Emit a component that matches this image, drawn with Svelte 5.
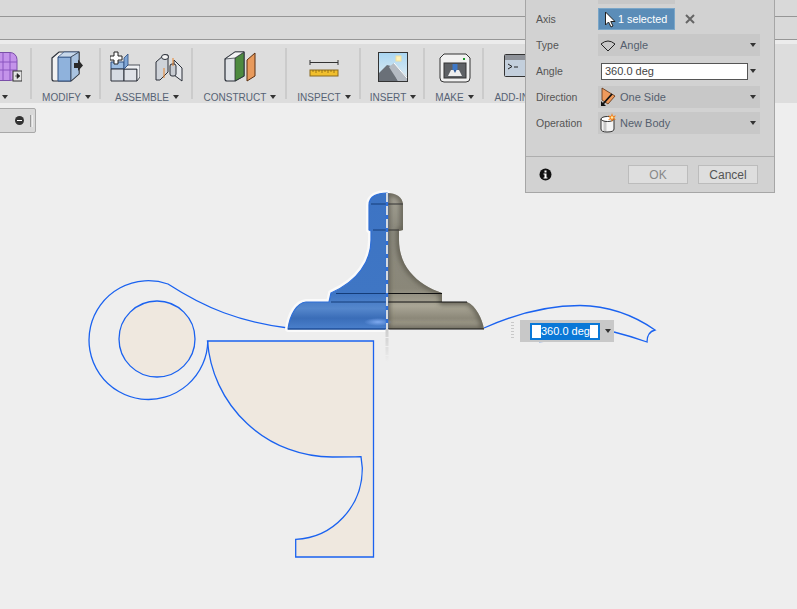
<script lang="ts">
  // Revolve dialog over the sketch canvas
  const dropdowns = {
    type: 'Angle',
    direction: 'One Side',
    operation: 'New Body',
  };
  const angle = '360.0 deg';

  // Full profile of the revolved body, screen coordinates (canvas viewBox starts at y=103)
  const blueHalf =
    'M387 193 C378 193 369 196 369 205 V230 L371 231 V240 C371 252 367 262 361 270 C354 280 344 287 331 293 L329 302 H306 C297 303 290 314 288 329 H387 Z';
  const greyHalf =
    'M387 193 C396 193 403 197 403 205 V230 L399 231 V240 C399 252 403 264 410 272 C418 282 430 289 442 293 V302 H467 C476 306 482 318 484 329 H387 Z';
</script>

<div class="app">
  <div class="menu-bar"></div>
  <div class="tab-bar"></div>

  <div class="toolbar">
    <div class="group" style="width: 32px">
      <svg class="tool-first" width="36" height="34" viewBox="0 0 36 34">
        <rect x="1" y="2.500" width="30" height="28" rx="7" fill="#c493ea" stroke="#7a4fa8" />
        <path d="M1 12H31M1 20H31M9 3V30M17 3V30M24 3V30" stroke="#8a55c0" stroke-width="1" fill="none" />
        <rect x="27" y="21" width="9" height="10" fill="#e4e4e4" stroke="#333" />
        <path d="M29 26H32M31 23.5L34 26L31 28.5Z" fill="#222" stroke="#222" stroke-width=".6" />
      </svg>
      <div class="label"><i></i></div>
    </div>

    <div class="group" style="width: 69px">
      <svg width="34" height="34" viewBox="0 0 34 34">
        <path d="M2 8L9 2H29V24L21 31H4Q2 31 2 29Z" fill="#f2f2f2" stroke="#2a2f38" stroke-width="1.2" />
        <path d="M8 7H21V31H8Z" fill="#8fb2dc" stroke="#2d4f80" />
        <path d="M8 7L14 2H29L21 7Z" fill="#c8d8ea" stroke="#2d4f80" stroke-width=".7" />
        <path d="M21 7L29 2V24L21 31Z" fill="#a9c3e0" stroke="#2a2f38" stroke-width=".7" />
        <path d="M24 13H28V9.5L33 15.5L28 21V18H24Z" fill="#2a2a2a" />
      </svg>
      <div class="label">MODIFY<i></i></div>
    </div>

    <div class="group" style="width: 92px">
      <div class="icons">
        <svg width="30" height="34" viewBox="0 0 30 34">
          <path d="M1 12H14V19H1Z" fill="#9cbde2" stroke="#2d4f80" />
          <path d="M1 19H14V31H1Z" fill="#d6dbe3" stroke="#2a2f38" />
          <path d="M14 19H27V31H14Z" fill="#dfe2e8" stroke="#2a2f38" />
          <path d="M14 19L18 15H30V27L27 31V19Z" fill="#eef0f3" stroke="#2a2f38" stroke-width=".8" />
          <path d="M14 8L18 4V15L14 19Z" fill="#7fa6d6" stroke="#2d4f80" stroke-width=".8" />
          <path d="M4 2H8V6H12V10H8V14H4V10H0V6H4Z" fill="#fff" stroke="#222" />
        </svg>
        <svg width="30" height="34" viewBox="0 0 30 34">
          <path d="M2 12L10 5H14V22L6 30H2Z" fill="#cfd3d9" stroke="#2a2f38" />
          <ellipse cx="11" cy="7" rx="3.5" ry="2.5" fill="#f5f5f5" stroke="#2a2f38" />
          <path d="M10 18V28" stroke="#e8842c" stroke-width="1" />
          <path d="M20 10L28 18V31L20 25Z" fill="#e6e8ec" stroke="#2a2f38" />
          <rect x="16" y="14" width="6" height="12" rx="2" fill="#c8ccd2" stroke="#2a2f38" />
          <path d="M19 8V16" stroke="#e8842c" stroke-width="1" />
        </svg>
      </div>
      <div class="label">ASSEMBLE<i></i></div>
    </div>

    <div class="group" style="width: 94px">
      <svg width="32" height="34" viewBox="0 0 32 34">
        <path d="M1 9L11 2H20V26L11 31H3Q1 31 1 29Z" fill="#dfe2e6" stroke="#2a2f38" stroke-width="1.2" />
        <path d="M11 8L20 2V26L11 31Z" fill="#4d8a3f" stroke="#2a2f38" stroke-width=".8" />
        <path d="M1 9L11 2H20L11 8Z" fill="#f4f4f4" stroke="#2a2f38" stroke-width=".7" />
        <path d="M23 10L31 3V26L23 31Z" fill="#e89a5c" stroke="#5a2e10" />
      </svg>
      <div class="label">CONSTRUCT<i></i></div>
    </div>

    <div class="group" style="width: 74px">
      <svg width="32" height="34" viewBox="0 0 32 34">
        <path d="M2 10V15M2 12.5H30M30 10V15" stroke="#333" stroke-width="1" fill="none" />
        <rect x="2" y="20" width="28" height="6" fill="#f1bf2d" stroke="#8a6a20" />
        <path d="M5 20V22M8 20V23M11 20V22M14 20V23M17 20V22M20 20V23M23 20V22M26 20V23" stroke="#7a5a10" stroke-width=".7" />
      </svg>
      <div class="label">INSPECT<i></i></div>
    </div>

    <div class="group" style="width: 64px">
      <svg width="32" height="34" viewBox="0 0 32 34">
        <defs>
          <linearGradient id="sky" x1="0" y1="0" x2="0" y2="1">
            <stop offset="0" stop-color="#a9d6f2" />
            <stop offset="1" stop-color="#e4eef3" />
          </linearGradient>
        </defs>
        <rect x="1.5" y="2.5" width="29" height="29" fill="url(#sky)" stroke="#333" />
        <rect x="19" y="6" width="5" height="5" fill="#fff3b8" stroke="#f0e0a0" />
        <path d="M2 31V23L10 15L14 16L21 31Z" fill="#6a7078" />
        <path d="M12 17L17 13L30 27V31H21Z" fill="#b4bac2" />
        <path d="M17 13L30 28" stroke="#fff" stroke-width="1" />
      </svg>
      <div class="label">INSERT<i></i></div>
    </div>

    <div class="group" style="width: 59px">
      <svg width="32" height="34" viewBox="0 0 32 34">
        <path d="M5 4H27L31 8V28Q31 32 27 32H5Q1 32 1 28V8Z" fill="#f1f1f1" stroke="#333" />
        <rect x="5" y="13" width="22" height="15" fill="#5e6165" stroke="#333" />
        <path d="M9 26L12 20H20L23 26Z" fill="#eee" />
        <rect x="13.5" y="14" width="5" height="6" fill="#3d78c8" />
        <path d="M14.5 20H17.5L16 23Z" fill="#2c5a9c" />
        <rect x="24" y="8" width="2" height="2" fill="#1a9a2a" />
      </svg>
      <div class="label">MAKE<i></i></div>
    </div>

    <div class="group" style="width: 72px">
      <svg width="34" height="34" viewBox="0 0 34 34">
        <rect x="1.5" y="4.5" width="32" height="22" rx="1" fill="#c3cfdc" stroke="#333" />
        <rect x="2" y="5" width="31" height="5" fill="#8e9299" />
        <path d="M5 14L9 16.5L5 19M11 17H15" stroke="#222" stroke-width="1" fill="none" />
        <circle cx="31" cy="26" r="5" fill="#eef" stroke="#2f6bb5" stroke-width="2" />
      </svg>
      <div class="label">ADD-INS<i></i></div>
    </div>
  </div>

  <div class="canvas">
    <svg class="sketch" width="797" height="506" viewBox="0 103 797 506">
      <defs>
        <linearGradient id="blue-body" x1="0" y1="193" x2="0" y2="329" gradientUnits="userSpaceOnUse">
          <stop offset="0" stop-color="#3d74c4" />
          <stop offset="0.75" stop-color="#3f76c4" />
          <stop offset="0.85" stop-color="#5587cc" />
          <stop offset="0.92" stop-color="#3a6db8" />
          <stop offset="1" stop-color="#4a80cc" />
        </linearGradient>
        <linearGradient id="grey-body" x1="0" y1="193" x2="0" y2="329" gradientUnits="userSpaceOnUse">
          <stop offset="0" stop-color="#a5a296" />
          <stop offset="0.25" stop-color="#8d8b80" />
          <stop offset="0.7" stop-color="#8a8779" />
          <stop offset="0.83" stop-color="#aaa696" />
          <stop offset="0.92" stop-color="#8c8879" />
          <stop offset="1" stop-color="#a7a394" />
        </linearGradient>
        <linearGradient id="axis-fade" x1="0" y1="329" x2="0" y2="362" gradientUnits="userSpaceOnUse">
          <stop offset="0" stop-color="#ccc" />
          <stop offset="1" stop-color="#eee" />
        </linearGradient>
        <radialGradient id="shine">
          <stop offset="0" stop-color="#7faaf0" />
          <stop offset="1" stop-color="#7faaf0" stop-opacity="0" />
        </radialGradient>
        <clipPath id="grey-clip"><path d={greyHalf} /></clipPath>
        <filter id="soft" x="-20%" y="-20%" width="140%" height="140%"><feGaussianBlur stdDeviation="2.500" /></filter>
      </defs>

      <!-- sketch profiles -->
      <g class="profile">
        <circle class="filled" cx="157" cy="339" r="38" />
        <path class="filled" d="M207.5 341 H373.5 V557 H295.7 V539.3 A69 71 0 0 0 362.3 468 L361 456.7 Q350 457 333 457 A125 125 0 0 1 207.5 341 Z" />
        <path d="M207.8 341 A59.400 59.400 0 1 1 168 284 C205 308 240 322 288 328" />
        <path d="M484 328 C513 315 545 305.500 580 305.500 C610 306 635 316 655 330 Q647 332 647 342 Q630 336 614 332" />
        <path class="faint" d="M539 342 L545 341" />
      </g>

      <!-- revolve preview -->
      <path d={blueHalf} class="halo" />
      <path d={greyHalf} fill="url(#grey-body)" />
      <g clip-path="url(#grey-clip)">
        <path d={greyHalf} class="grey-edge" filter="url(#soft)" />
      </g>
      <path d={blueHalf} fill="url(#blue-body)" stroke="#2f6fd8" stroke-width="1.2" />
      <ellipse cx="378" cy="322" rx="14" ry="4" fill="url(#shine)" />

      <g class="seams">
        <path d="M371 204H387M373 230H387M336 293.500H387M331 302H387M288 329H387" stroke="#143c78" />
        <path d="M387 204H403M387 230H399" stroke="#333" />
        <path d="M387 293.500H442M387 302H467M387 329H484" stroke="#111" />
      </g>

      <path d="M387 193V329" class="axis-under" />
      <path d="M387 193V329" class="axis-dash" />
      <path d="M387 329V362" stroke="url(#axis-fade)" stroke-width="3" stroke-dasharray="8 1" fill="none" />
    </svg>

    <!-- angle input attached to the manipulator -->
    <div class="grip"></div>
    <div class="manip">
      <div class="manip-input"><span>{angle}</span></div>
      <i class="caret"></i>
    </div>

    <div class="browser-pill">
      <span class="minus"></span>
      <span class="pill-grip"></span>
    </div>
  </div>

  <div class="panel">
    <div class="rows">
      <div class="row"><span></span><div class="cut-button"></div></div>

      <div class="row">
        <span>Axis</span>
        <div class="selected">
          <svg width="12" height="17" viewBox="0 0 12 17">
            <path d="M1.5 1V14L4.5 11L7 16L9 15L6.8 10.5H11Z" fill="#fff" stroke="#222" stroke-width="1" />
          </svg>
          1 selected
        </div>
        <svg class="clear" width="10" height="10" viewBox="0 0 10 10">
          <path d="M1 1L9 9M9 1L1 9" stroke="#666" stroke-width="2" />
        </svg>
      </div>

      <div class="row">
        <span>Type</span>
        <div class="dropdown">
          <svg width="16" height="13" viewBox="0 0 16 13">
            <path d="M1 5L8 12L15 5" stroke="#222" fill="none" />
            <path d="M1 5Q8 -1 15 5" stroke="#222" fill="none" />
          </svg>
          {dropdowns.type}<i class="caret"></i>
        </div>
      </div>

      <div class="row">
        <span>Angle</span>
        <div class="angle-field">
          <div class="angle-input">{angle}</div>
          <i class="caret"></i>
        </div>
      </div>

      <div class="row">
        <span>Direction</span>
        <div class="dropdown">
          <svg width="16" height="20" viewBox="0 0 16 20">
            <path d="M2 1L15 9L8 17L2 13Z" fill="#ef9a5c" stroke="#5a2e10" stroke-width=".8" />
            <path d="M12 7L3 17" stroke="#111" stroke-width="1.8" />
            <path d="M1 19V14L6 19Z" fill="#111" />
          </svg>
          {dropdowns.direction}<i class="caret"></i>
        </div>
      </div>

      <div class="row">
        <span>Operation</span>
        <div class="dropdown">
          <svg width="16" height="20" viewBox="0 0 16 20">
            <path d="M1 6V16Q1 19 7 19Q14 19 14 16V6Z" fill="#f4f4f4" stroke="#333" />
            <path d="M5 8V18" stroke="#c8c8c8" stroke-width="3" />
            <ellipse cx="7.5" cy="6" rx="6.5" ry="2.5" fill="#fff" stroke="#333" />
            <path d="M12 0L13 3L16 2.500L14 5L16 7L13 6.500L12 9L11 6.500L8 7L10 5L8 2.500L11 3Z" fill="#f08020" />
            <circle cx="12" cy="4.500" r="1.300" fill="#ffe9a0" />
          </svg>
          {dropdowns.operation}<i class="caret"></i>
        </div>
      </div>
    </div>

    <div class="footer">
      <svg width="13" height="13" viewBox="0 0 13 13">
        <circle cx="6.500" cy="6.500" r="6" fill="#111" />
        <rect x="5.500" y="2.500" width="2" height="2" fill="#fff" />
        <path d="M4.500 5.500H7.500V9.500H8.500V10.500H4.500V9.500H5.500V6.500H4.500Z" fill="#fff" />
      </svg>
      <button class="ok">OK</button>
      <button>Cancel</button>
    </div>
  </div>
</div>

<style>
  :global(body) {
    margin: 0;
  }

  .app {
    position: relative;
    width: 797px;
    height: 609px;
    overflow: hidden;
    display: flex;
    flex-direction: column;
    background: #eeeeee;
    font-family: "Liberation Sans", Arial, sans-serif;
  }

  .menu-bar {
    height: 16px;
    flex: none;
    background: #d9d9d9;
    border-bottom: 1px solid #969696;
  }

  .tab-bar {
    height: 22px;
    flex: none;
    background: #d9d9d9;
    border-bottom: 1px solid #969696;
  }

  .toolbar {
    height: 59px;
    flex: none;
    margin-top: 4px;
    display: flex;
    background: #dddddd;
    box-shadow: 0 -4px 0 #ececec;
  }

  .group {
    position: relative;
    flex: none;
    display: flex;
    flex-direction: column;
    align-items: center;
    padding-top: 6px;
    box-sizing: border-box;
  }

  .group::after {
    content: '';
    position: absolute;
    right: 0;
    top: 4px;
    bottom: 4px;
    width: 2px;
    background: #cbcbcb;
  }

  .tool-first {
    align-self: flex-start;
    margin-left: -14px;
  }

  .icons {
    display: flex;
    gap: 14px;
  }

  .label {
    display: flex;
    align-items: center;
    gap: 4px;
    height: 12px;
    margin-top: 7px;
    font-size: 10px;
    color: #566274;
    white-space: nowrap;
  }

  .group:first-child .label {
    align-self: flex-start;
    margin-left: 2px;
  }

  .label i,
  .caret {
    display: inline-block;
    width: 0;
    height: 0;
    border-left: 3px solid transparent;
    border-right: 3px solid transparent;
    border-top: 4px solid #333;
  }

  .canvas {
    position: relative;
    flex: 1;
    background: #eeeeee;
  }

  .sketch {
    position: absolute;
    left: 0;
    top: 0;
    display: block;
  }

  .profile path,
  .profile circle {
    fill: none;
    stroke: #1a62f0;
    stroke-width: 1.3;
  }

  .profile .filled {
    fill: #efe8df;
  }

  .profile .faint {
    stroke: #9ab4e0;
  }

  .halo {
    fill: none;
    stroke: #fafafa;
    stroke-width: 6;
    stroke-linejoin: round;
  }

  .grey-edge {
    fill: none;
    stroke: #5f5c50;
    stroke-width: 5;
  }

  .seams path {
    fill: none;
    stroke-width: 1;
  }

  .axis-under {
    fill: none;
    stroke: #2f6fd8;
    stroke-width: 2.500;
  }

  .axis-dash {
    fill: none;
    stroke: #d4dae2;
    stroke-width: 2;
    stroke-dasharray: 9 4;
  }

  .grip {
    position: absolute;
    left: 511px;
    top: 219px;
    width: 3px;
    height: 18px;
    background: repeating-linear-gradient(#c8c8c8 0 1px, transparent 1px 3px);
  }

  .manip {
    position: absolute;
    left: 520px;
    top: 217px;
    width: 94px;
    height: 22px;
    padding-left: 10px;
    box-sizing: border-box;
    display: flex;
    align-items: center;
    gap: 5px;
    background: #c8c8c8;
  }

  .manip-input {
    width: 70px;
    height: 17px;
    padding-left: 9px;
    box-sizing: border-box;
    background: #fff;
    border: 2px solid #0a78d7;
    font-size: 11px;
    line-height: 13px;
  }

  .manip-input span {
    display: inline-block;
    background: #0a78d7;
    color: #fff;
  }

  .browser-pill {
    position: absolute;
    left: -3px;
    top: 5px;
    width: 39px;
    height: 25px;
    display: flex;
    align-items: center;
    justify-content: flex-end;
    gap: 6px;
    box-sizing: border-box;
    padding-right: 2px;
    background: #d9d9d9;
    border: 1px solid #a8a8a8;
    border-radius: 2px;
  }

  .minus {
    position: relative;
    width: 9px;
    height: 9px;
    border-radius: 50%;
    background: #333;
  }

  .minus::after {
    content: '';
    position: absolute;
    left: 2px;
    right: 2px;
    top: 4px;
    height: 1px;
    background: #fff;
  }

  .pill-grip {
    width: 1px;
    height: 12px;
    border-left: 1px solid #999;
    border-right: 1px solid #eee;
  }

  .panel {
    position: absolute;
    left: 525px;
    top: -22px;
    width: 250px;
    height: 215px;
    box-sizing: border-box;
    display: flex;
    flex-direction: column;
    background: #d2d2d2;
    border: 1px solid #a6a6a6;
    font-size: 11px;
    color: #555a62;
  }

  .rows {
    display: flex;
    flex-direction: column;
    gap: 4px;
    padding: 3px 14px 22px 10px;
  }

  .row {
    height: 22px;
    display: flex;
    align-items: center;
  }

  .row > span {
    width: 62px;
    flex: none;
    font-size: 10.500px;
    color: #555;
  }

  .cut-button {
    width: 77px;
    height: 22px;
    background: #c8c8c8;
  }

  .selected {
    width: 77px;
    height: 22px;
    box-sizing: border-box;
    display: flex;
    align-items: center;
    gap: 2px;
    padding-left: 5px;
    background: #5b8db8;
    border: 1px solid #7aa6c8;
    font-size: 10.800px;
    color: #fff;
    white-space: nowrap;
  }

  .clear {
    margin-left: 10px;
  }

  .dropdown {
    flex: 1;
    height: 22px;
    display: flex;
    align-items: center;
    gap: 4px;
    padding: 0 4px 0 2px;
    background: #c8c8c8;
    font-size: 11px;
    color: #555f6e;
  }

  .dropdown .caret {
    margin-left: auto;
  }

  .angle-field {
    flex: 1;
    display: flex;
    align-items: center;
    gap: 2px;
    padding: 0 4px 0 3px;
  }

  .angle-input {
    flex: 1;
    height: 17px;
    box-sizing: border-box;
    padding-left: 3px;
    background: #fff;
    border: 1px solid #555;
    font-size: 11px;
    line-height: 15px;
    color: #444;
  }

  .footer {
    flex: 1;
    display: flex;
    align-items: center;
    padding: 0 16px 0 13px;
    border-top: 1px solid #aeaeae;
  }

  .footer button {
    width: 60px;
    height: 19px;
    margin-left: 10px;
    padding: 0;
    background: #dedede;
    border: 1px solid #bcbcbc;
    font: 12px "Liberation Sans", Arial, sans-serif;
    color: #555;
  }

  .footer .ok {
    margin-left: auto;
    color: #888;
  }
</style>
